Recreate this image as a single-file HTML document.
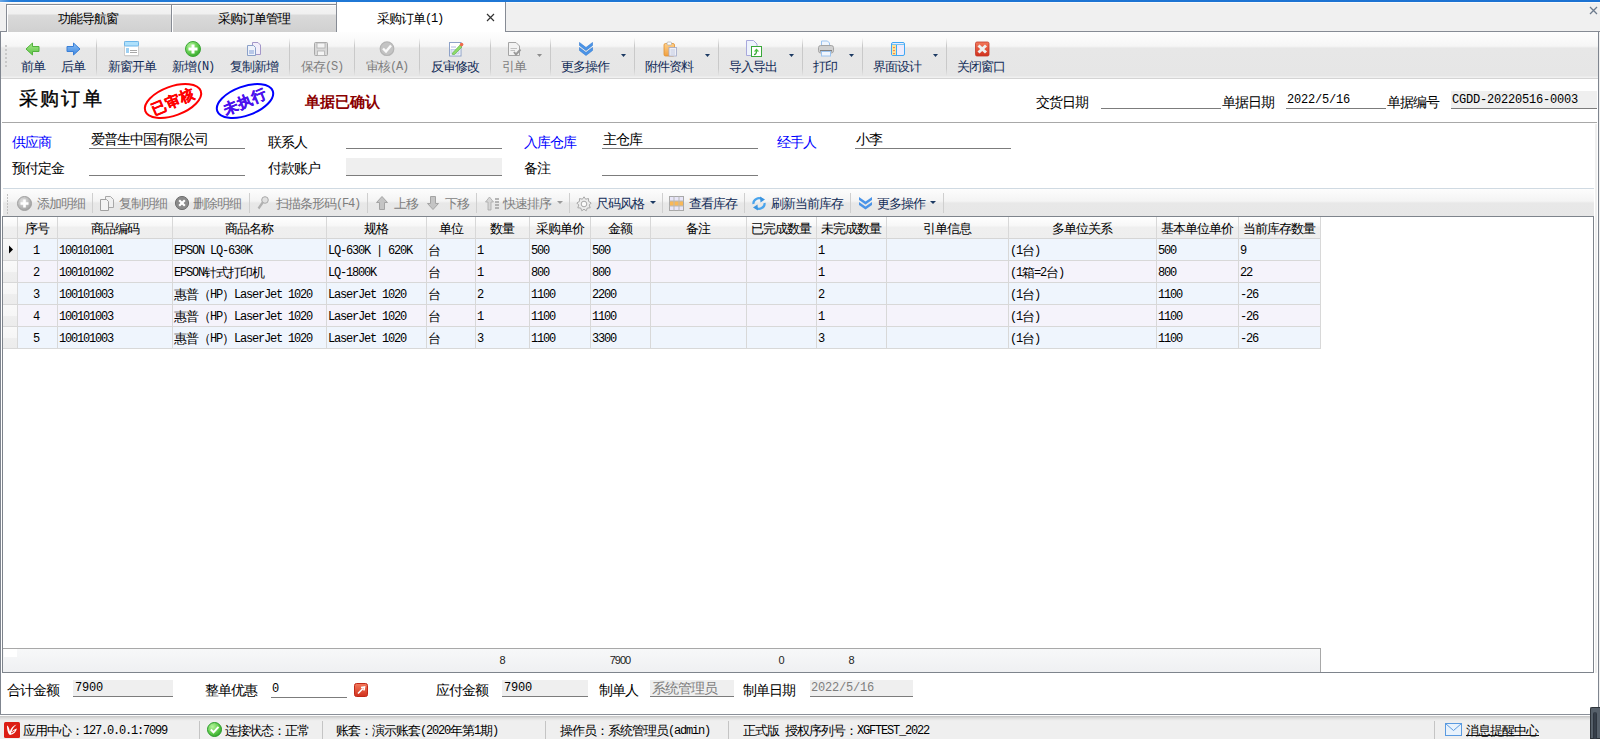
<!DOCTYPE html><html><head><meta charset="utf-8"><style>
*{margin:0;padding:0;box-sizing:border-box}
html,body{width:1600px;height:739px;overflow:hidden;background:#f0f0f0;font-family:"Liberation Sans",sans-serif;position:relative}
.t{position:absolute;font-size:13px;line-height:13px;letter-spacing:-1px;white-space:nowrap;color:#000}
.a{font-family:"Liberation Mono",monospace;font-size:12px;letter-spacing:-1.2px;position:relative;top:-1px}
.w{font-family:"Liberation Mono",monospace;font-size:12px;letter-spacing:-0.2px;position:relative;top:-1px}
.nv{color:#132d58}
.dis{color:#7e7e7e}
.bl{color:#0000ff}
.f{font-size:14px;line-height:15px;letter-spacing:-1px}
</style></head><body>
<div style="position:absolute;left:0px;top:0px;width:1600px;height:2px;background:linear-gradient(90deg,#6aa6e4,#2079d6 12px,#1c72d2)"></div>
<div style="position:absolute;left:0px;top:2px;width:1600px;height:1px;background:#fafafa"></div>
<div style="position:absolute;left:0px;top:31px;width:1600px;height:1px;background:#868b94"></div>
<div style="position:absolute;left:6px;top:4px;width:166px;height:28px;border:1px solid #868b94;border-bottom:none;box-shadow:inset 1px 1px 0 #fff;background:linear-gradient(#f3f3f3 0,#f0f0f0 9px,#dadada 10px,#d0d0d0 100%)"></div>
<div class="t " style="left:58px;top:12px;">功能导航窗</div>
<div style="position:absolute;left:171px;top:4px;width:166px;height:28px;border:1px solid #868b94;border-bottom:none;box-shadow:inset 1px 1px 0 #fff;background:linear-gradient(#f3f3f3 0,#f0f0f0 9px,#dadada 10px,#d0d0d0 100%)"></div>
<div class="t " style="left:218px;top:12px;">采购订单管理</div>
<div style="position:absolute;left:336px;top:2px;width:170px;height:30px;border-left:1px solid #868b94;border-right:1px solid #868b94;background:#fff"></div>
<div class="t " style="left:377px;top:12px;">采购订单<span class="a">(1)</span></div>
<svg style="position:absolute;left:486px;top:13px" width="9" height="9" viewBox="0 0 9 9"><path d="M1 1L8 8M8 1L1 8" stroke="#333" stroke-width="1.2"/></svg>
<svg style="position:absolute;left:1589px;top:6px" width="9" height="9" viewBox="0 0 9 9"><path d="M1 1L8 8M8 1L1 8" stroke="#6d7b8d" stroke-width="1.3"/></svg>
<div style="position:absolute;left:0px;top:32px;width:1599px;height:683px;background:#fff;border-left:1px solid #7f858f;border-right:1px solid #7f858f"></div>
<div style="position:absolute;left:0px;top:714px;width:1599px;height:1px;background:#8a8f98"></div>
<div style="position:absolute;left:1px;top:32px;width:1597px;height:46px;background:linear-gradient(#fefefe 0,#f6f6f6 14px,#f0f0f0 15px,#e7e7e7 16px,#e6e6e6 44px,#f0f0f0 45px)"></div>
<div style="position:absolute;left:1px;top:78px;width:1597px;height:1px;background:#d4d4d4"></div>
<div style="position:absolute;left:5px;top:45px;width:2px;height:2px;background:#c8c8c8"></div>
<div style="position:absolute;left:5px;top:49px;width:2px;height:2px;background:#c8c8c8"></div>
<div style="position:absolute;left:5px;top:53px;width:2px;height:2px;background:#c8c8c8"></div>
<div style="position:absolute;left:5px;top:57px;width:2px;height:2px;background:#c8c8c8"></div>
<div style="position:absolute;left:5px;top:61px;width:2px;height:2px;background:#c8c8c8"></div>
<div style="position:absolute;left:5px;top:65px;width:2px;height:2px;background:#c8c8c8"></div>
<div class="t nv" style="left:21px;top:60px;">前单</div>
<div class="t nv" style="left:61px;top:60px;">后单</div>
<div style="position:absolute;left:96px;top:38px;width:1px;height:38px;background:linear-gradient(rgba(200,200,200,0),#c9c9c9 20%,#c9c9c9 80%,rgba(200,200,200,0))"></div>
<div class="t nv" style="left:108px;top:60px;">新窗开单</div>
<div class="t nv" style="left:172px;top:60px;">新增<span class="a">(N)</span></div>
<div class="t nv" style="left:230px;top:60px;">复制新增</div>
<div style="position:absolute;left:289px;top:38px;width:1px;height:38px;background:linear-gradient(rgba(200,200,200,0),#c9c9c9 20%,#c9c9c9 80%,rgba(200,200,200,0))"></div>
<div class="t dis" style="left:301px;top:60px;">保存<span class="a">(S)</span></div>
<div style="position:absolute;left:354px;top:38px;width:1px;height:38px;background:linear-gradient(rgba(200,200,200,0),#c9c9c9 20%,#c9c9c9 80%,rgba(200,200,200,0))"></div>
<div class="t dis" style="left:366px;top:60px;">审核<span class="a">(A)</span></div>
<div style="position:absolute;left:419px;top:38px;width:1px;height:38px;background:linear-gradient(rgba(200,200,200,0),#c9c9c9 20%,#c9c9c9 80%,rgba(200,200,200,0))"></div>
<div class="t nv" style="left:431px;top:60px;">反审修改</div>
<div style="position:absolute;left:490px;top:38px;width:1px;height:38px;background:linear-gradient(rgba(200,200,200,0),#c9c9c9 20%,#c9c9c9 80%,rgba(200,200,200,0))"></div>
<div class="t dis" style="left:502px;top:60px;">引单</div>
<div style="position:absolute;left:550px;top:38px;width:1px;height:38px;background:linear-gradient(rgba(200,200,200,0),#c9c9c9 20%,#c9c9c9 80%,rgba(200,200,200,0))"></div>
<div class="t nv" style="left:561px;top:60px;">更多操作</div>
<div style="position:absolute;left:634px;top:38px;width:1px;height:38px;background:linear-gradient(rgba(200,200,200,0),#c9c9c9 20%,#c9c9c9 80%,rgba(200,200,200,0))"></div>
<div class="t nv" style="left:645px;top:60px;">附件资料</div>
<div style="position:absolute;left:718px;top:38px;width:1px;height:38px;background:linear-gradient(rgba(200,200,200,0),#c9c9c9 20%,#c9c9c9 80%,rgba(200,200,200,0))"></div>
<div class="t nv" style="left:729px;top:60px;">导入导出</div>
<div style="position:absolute;left:802px;top:38px;width:1px;height:38px;background:linear-gradient(rgba(200,200,200,0),#c9c9c9 20%,#c9c9c9 80%,rgba(200,200,200,0))"></div>
<div class="t nv" style="left:813px;top:60px;">打印</div>
<div style="position:absolute;left:862px;top:38px;width:1px;height:38px;background:linear-gradient(rgba(200,200,200,0),#c9c9c9 20%,#c9c9c9 80%,rgba(200,200,200,0))"></div>
<div class="t nv" style="left:873px;top:60px;">界面设计</div>
<div style="position:absolute;left:946px;top:38px;width:1px;height:38px;background:linear-gradient(rgba(200,200,200,0),#c9c9c9 20%,#c9c9c9 80%,rgba(200,200,200,0))"></div>
<div class="t nv" style="left:957px;top:60px;">关闭窗口</div>
<svg style="position:absolute;left:537px;top:54px" width="6" height="4" viewBox="0 0 6 4"><path d="M0 0H5L2.5 3z" fill="#8d8d8d"/></svg>
<svg style="position:absolute;left:621px;top:54px" width="6" height="4" viewBox="0 0 6 4"><path d="M0 0H5L2.5 3z" fill="#1c3a63"/></svg>
<svg style="position:absolute;left:705px;top:54px" width="6" height="4" viewBox="0 0 6 4"><path d="M0 0H5L2.5 3z" fill="#1c3a63"/></svg>
<svg style="position:absolute;left:789px;top:54px" width="6" height="4" viewBox="0 0 6 4"><path d="M0 0H5L2.5 3z" fill="#1c3a63"/></svg>
<svg style="position:absolute;left:849px;top:54px" width="6" height="4" viewBox="0 0 6 4"><path d="M0 0H5L2.5 3z" fill="#1c3a63"/></svg>
<svg style="position:absolute;left:933px;top:54px" width="6" height="4" viewBox="0 0 6 4"><path d="M0 0H5L2.5 3z" fill="#1c3a63"/></svg>
<svg width="0" height="0" style="position:absolute"><defs>
<linearGradient id="gG" x1="0" y1="0" x2="0" y2="1"><stop offset="0" stop-color="#a6e88a"/><stop offset="1" stop-color="#5cc245"/></linearGradient>
<linearGradient id="gB" x1="0" y1="0" x2="0" y2="1"><stop offset="0" stop-color="#8cc0f5"/><stop offset="1" stop-color="#3d86e0"/></linearGradient>
<radialGradient id="gC" cx="0.35" cy="0.3" r="0.75"><stop offset="0" stop-color="#b4f49c"/><stop offset="0.6" stop-color="#62cc4e"/><stop offset="1" stop-color="#34a62c"/></radialGradient>
<radialGradient id="gCg" cx="0.4" cy="0.35" r="0.7"><stop offset="0" stop-color="#e6e6e6"/><stop offset="1" stop-color="#9c9c9c"/></radialGradient>
<linearGradient id="gO" x1="0" y1="0" x2="0" y2="1"><stop offset="0" stop-color="#ffd08a"/><stop offset="1" stop-color="#f0a040"/></linearGradient>
<linearGradient id="gR" x1="0" y1="0" x2="0" y2="1"><stop offset="0" stop-color="#f47a5c"/><stop offset="1" stop-color="#d0301c"/></linearGradient>
</defs></svg>
<svg style="position:absolute;left:25px;top:42px" width="15" height="14" viewBox="0 0 15 14"><path d="M1 7L7.5 1V4.5H14V9.5H7.5V13Z" fill="url(#gG)" stroke="#52b23c" stroke-width="1"/></svg>
<svg style="position:absolute;left:66px;top:42px" width="15" height="14" viewBox="0 0 15 14"><path d="M14 7L7.5 1V4.5H1V9.5H7.5V13Z" fill="url(#gB)" stroke="#3a7fd6" stroke-width="1"/></svg>
<svg style="position:absolute;left:124px;top:41px" width="16" height="16" viewBox="0 0 16 16"><rect x="0.5" y="0.5" width="14" height="14" fill="#fff" stroke="#cdcdcd"/><rect x="0.5" y="0.5" width="14" height="4.5" rx="1" fill="#aee0fb" stroke="#6cb6ea"/><rect x="2" y="7" width="3" height="5" fill="#9ed0f2"/><path d="M6 9.5H13M6 11.5H13" stroke="#a8a8a8"/><path d="M1 15.5H15" stroke="#dcdcdc"/></svg>
<svg style="position:absolute;left:185px;top:41px" width="16" height="16" viewBox="0 0 16 16"><circle cx="8" cy="8" r="7.5" fill="url(#gC)" stroke="#3da638" stroke-width="1"/><path d="M8 3.5V12.5M3.5 8H12.5" stroke="#fff" stroke-width="3"/></svg>
<svg style="position:absolute;left:246px;top:41px" width="16" height="16" viewBox="0 0 16 16"><path d="M6.5 1.5H12L14.5 4V13.5H6.5Z" fill="#f2eefa" stroke="#a497c9"/><path d="M1.5 4.5H7.5L9.5 6.5V14.5H1.5Z" fill="#eef2fa" stroke="#8aa0c8"/><rect x="3" y="9" width="5" height="4" fill="#b8c8e8"/></svg>
<svg style="position:absolute;left:313px;top:41px" width="16" height="16" viewBox="0 0 16 16"><rect x="1.5" y="1.5" width="13" height="13" rx="1" fill="#d8d8d8" stroke="#a8a8a8"/><rect x="4" y="2" width="8" height="5" fill="#f4f4f4" stroke="#b0b0b0" stroke-width="0.8"/><rect x="4.5" y="10" width="7" height="4.5" fill="#f4f4f4" stroke="#b0b0b0" stroke-width="0.8"/></svg>
<svg style="position:absolute;left:379px;top:41px" width="16" height="16" viewBox="0 0 16 16"><circle cx="8" cy="7.7" r="6.8" fill="#c4c4c4" stroke="#b4b4b4" stroke-width="1.2"/><path d="M4 7.5L7 10.5L12 4.5" stroke="#fafafa" stroke-width="2.4" fill="none"/></svg>
<svg style="position:absolute;left:448px;top:41px" width="16" height="16" viewBox="0 0 16 16"><rect x="1.5" y="1.5" width="11.5" height="13.5" fill="#fff" stroke="#8ea2c8"/><path d="M3 6H8" stroke="#b0b8e0"/><rect x="3" y="8.5" width="8" height="4.5" fill="#dfe6f6" stroke="#b8c6e6" stroke-width="0.8"/><path d="M4.5 12L12 4L14 6L6.5 13.5H4.5Z" fill="#8edc6a" stroke="#5cb040" stroke-width="0.6"/><circle cx="13.6" cy="3.6" r="1.8" fill="#f06a4c"/></svg>
<svg style="position:absolute;left:507px;top:41px" width="15" height="16" viewBox="0 0 15 16"><path d="M1.5 1.5H9L12.5 5V14.5H1.5Z" fill="#f2f2f2" stroke="#a4a4a4"/><path d="M3.5 7.5H10M3.5 9.5H8" stroke="#c0c0c0"/><path d="M7 11L9 13.5L13.5 8.5" stroke="#9a9a9a" stroke-width="2" fill="none"/></svg>
<svg style="position:absolute;left:578px;top:41px" width="16" height="16" viewBox="0 0 16 16"><path d="M1.5 1.5L8 6.5L14.5 1.5V4.5L8 9.5L1.5 4.5Z" fill="#4a94e8" stroke="#2f78d2" stroke-width="0.6"/><path d="M1.5 6.5L8 11.5L14.5 6.5V9.5L8 14.5L1.5 9.5Z" fill="#4a94e8" stroke="#2f78d2" stroke-width="0.6"/></svg>
<svg style="position:absolute;left:663px;top:41px" width="15" height="16" viewBox="0 0 15 16"><rect x="1" y="2.5" width="10.5" height="12.5" rx="1.5" fill="url(#gO)" stroke="#e09030" stroke-width="0.8"/><rect x="4" y="1" width="4.5" height="3" rx="1" fill="#fff" stroke="#b0b0b0" stroke-width="0.8"/><rect x="6" y="6.5" width="7.5" height="8.5" fill="#eef0f8" stroke="#a0a8c8" stroke-width="0.8"/><path d="M7.5 9H12M7.5 11H12M7.5 13H12" stroke="#b8bfd8" stroke-width="0.8"/></svg>
<svg style="position:absolute;left:745px;top:40px" width="18" height="18" viewBox="0 0 18 18"><path d="M1.5 0.5H8.5L12 4V15.5H1.5Z" fill="#eef3fc" stroke="#a8a8dc"/><rect x="6.5" y="6.5" width="10" height="10" fill="#fff" stroke="#3aa83a"/><path d="M9 14.5C11 14.5 11.5 13 11.5 11" stroke="#3aa83a" stroke-width="1.3" fill="none"/><path d="M8.8 11.5L11.5 8.5L14.2 11.5Z" fill="#4cc040"/></svg>
<svg style="position:absolute;left:818px;top:40px" width="17" height="17" viewBox="0 0 17 17"><path d="M3.5 1H9.5L11.5 3V7H3.5Z" fill="#f0f6fe" stroke="#9cc4f0"/><rect x="0.5" y="5.5" width="15" height="7.5" rx="2.2" fill="#d0d0d0" stroke="#a4a4a4"/><path d="M2 10.8H14" stroke="#6a6a6a" stroke-width="1.2"/><rect x="3.5" y="11.5" width="9" height="4.5" fill="#f0f6fe" stroke="#9cc4f0"/></svg>
<svg style="position:absolute;left:891px;top:41px" width="15" height="16" viewBox="0 0 15 16"><rect x="0.5" y="1.5" width="13" height="13" rx="1.5" fill="#ecebfc" stroke="#40a8f4"/><path d="M1 3.5H13" stroke="#78c4f4"/><rect x="1" y="4" width="4.5" height="10" fill="#fbe59a"/><path d="M5.5 4V14" stroke="#40a8f4"/><path d="M2 6H4L3 7.5ZM2 9H4L3 10.5ZM2 12H4L3 13.5Z" fill="#f05830"/></svg>
<svg style="position:absolute;left:975px;top:41px" width="15" height="16" viewBox="0 0 15 16"><rect x="0.5" y="1" width="13.5" height="14" rx="1.5" fill="url(#gR)" stroke="#c03828" stroke-width="0.8"/><path d="M3.5 4.5L11 11.5M11 4.5L3.5 11.5" stroke="#eef0f0" stroke-width="3"/></svg>
<div class="t " style="left:19px;top:89px;font-size:19px;line-height:19px;letter-spacing:2.2px;-webkit-text-stroke:0.35px #000">采购订单</div>
<svg style="position:absolute;left:138.5px;top:79.8px" width="68" height="42" viewBox="0 0 68 42"><g transform="rotate(-20 34 21)"><ellipse cx="34" cy="21" rx="29.5" ry="14.5" fill="none" stroke="#ff0000" stroke-width="2"/></g><g transform="rotate(-23 34 21)"><text x="34" y="26.5" text-anchor="middle" font-size="14.5" font-weight="bold" fill="#ff0000" stroke="#ff0000" stroke-width="0.35" font-family="Liberation Sans">已审核</text></g></svg>
<svg style="position:absolute;left:210.5px;top:79.8px" width="68" height="42" viewBox="0 0 68 42"><g transform="rotate(-20 34 21)"><ellipse cx="34" cy="21" rx="29.5" ry="14.5" fill="none" stroke="#0000ff" stroke-width="2"/></g><g transform="rotate(-23 34 21)"><text x="34" y="26.5" text-anchor="middle" font-size="14.5" font-weight="bold" fill="#4a10ee" stroke="#4a10ee" stroke-width="0.35" font-family="Liberation Sans">未执行</text></g></svg>
<div class="t " style="left:305px;top:94px;font-size:15px;line-height:15px;letter-spacing:0;font-weight:bold;color:#8b0000">单据已确认</div>
<div class="t f" style="left:1036px;top:95px;">交货日期</div>
<div style="position:absolute;left:1101px;top:108px;width:120px;height:1px;background:#7c7c7c"></div>
<div class="t f" style="left:1222px;top:95px;">单据日期</div>
<div class="t " style="left:1287px;top:93px;"><span class="w">2022/5/16</span></div>
<div style="position:absolute;left:1286px;top:108px;width:100px;height:1px;background:#7c7c7c"></div>
<div class="t f" style="left:1387px;top:95px;">单据编号</div>
<div style="position:absolute;left:1451px;top:91px;width:146px;height:18px;background:#efefef;border-bottom:1px solid #7c7c7c"></div>
<div class="t " style="left:1452px;top:93px;"><span class="w">CGDD-20220516-0003</span></div>
<div style="position:absolute;left:2px;top:122px;width:1595px;height:1px;background:#a8a8a8"></div>
<div style="position:absolute;left:1595px;top:124px;width:2px;height:549px;background:#efefef"></div>
<div class="t bl f" style="left:12px;top:135px;">供应商</div>
<div class="t " style="left:91px;top:132px;font-size:14px;line-height:15px">爱普生中国有限公司</div>
<div style="position:absolute;left:89px;top:148px;width:156px;height:1px;background:#7c7c7c"></div>
<div class="t f" style="left:268px;top:135px;">联系人</div>
<div style="position:absolute;left:346px;top:148px;width:156px;height:1px;background:#7c7c7c"></div>
<div class="t bl f" style="left:524px;top:135px;">入库仓库</div>
<div class="t " style="left:603px;top:132px;font-size:14px;line-height:15px">主仓库</div>
<div style="position:absolute;left:602px;top:148px;width:156px;height:1px;background:#7c7c7c"></div>
<div class="t bl f" style="left:777px;top:135px;">经手人</div>
<div class="t " style="left:856px;top:132px;font-size:14px;line-height:15px">小李</div>
<div style="position:absolute;left:855px;top:148px;width:156px;height:1px;background:#7c7c7c"></div>
<div class="t f" style="left:12px;top:161px;">预付定金</div>
<div style="position:absolute;left:89px;top:175px;width:156px;height:1px;background:#7c7c7c"></div>
<div class="t f" style="left:268px;top:161px;">付款账户</div>
<div style="position:absolute;left:346px;top:158px;width:156px;height:18px;background:#efefef;border-bottom:1px solid #7c7c7c"></div>
<div class="t f" style="left:524px;top:161px;">备注</div>
<div style="position:absolute;left:602px;top:175px;width:156px;height:1px;background:#7c7c7c"></div>
<div style="position:absolute;left:3px;top:188px;width:1591px;height:1px;background:#d0dae2"></div>
<div style="position:absolute;left:3px;top:189px;width:1591px;height:27px;background:linear-gradient(#fdfdfd 0,#f4f4f4 12px,#efefef 13px,#e8e8e8 14px,#e7e7e7 100%)"></div>
<div style="position:absolute;left:7px;top:194px;width:1px;height:2px;background:#c0c0c0"></div>
<div style="position:absolute;left:7px;top:197px;width:1px;height:2px;background:#c0c0c0"></div>
<div style="position:absolute;left:7px;top:200px;width:1px;height:2px;background:#c0c0c0"></div>
<div style="position:absolute;left:7px;top:203px;width:1px;height:2px;background:#c0c0c0"></div>
<div style="position:absolute;left:7px;top:206px;width:1px;height:2px;background:#c0c0c0"></div>
<div style="position:absolute;left:7px;top:209px;width:1px;height:2px;background:#c0c0c0"></div>
<div style="position:absolute;left:7px;top:212px;width:1px;height:2px;background:#c0c0c0"></div>
<div style="position:absolute;left:92px;top:193px;width:1px;height:20px;background:#cfcfcf"></div>
<div style="position:absolute;left:249px;top:193px;width:1px;height:20px;background:#cfcfcf"></div>
<div style="position:absolute;left:367px;top:193px;width:1px;height:20px;background:#cfcfcf"></div>
<div style="position:absolute;left:476px;top:193px;width:1px;height:20px;background:#cfcfcf"></div>
<div style="position:absolute;left:569px;top:193px;width:1px;height:20px;background:#cfcfcf"></div>
<div style="position:absolute;left:662px;top:193px;width:1px;height:20px;background:#cfcfcf"></div>
<div style="position:absolute;left:744px;top:193px;width:1px;height:20px;background:#cfcfcf"></div>
<div style="position:absolute;left:850px;top:193px;width:1px;height:20px;background:#cfcfcf"></div>
<div style="position:absolute;left:943px;top:193px;width:1px;height:20px;background:#cfcfcf"></div>
<div class="t dis" style="left:37px;top:197px;">添加明细</div>
<div class="t dis" style="left:119px;top:197px;">复制明细</div>
<div class="t dis" style="left:193px;top:197px;">删除明细</div>
<div class="t dis" style="left:276px;top:197px;">扫描条形码<span class="a">(F4)</span></div>
<div class="t dis" style="left:394px;top:197px;">上移</div>
<div class="t dis" style="left:445px;top:197px;">下移</div>
<div class="t dis" style="left:503px;top:197px;">快速排序</div>
<div class="t nv" style="left:596px;top:197px;">尺码风格</div>
<div class="t nv" style="left:689px;top:197px;">查看库存</div>
<div class="t nv" style="left:771px;top:197px;">刷新当前库存</div>
<div class="t nv" style="left:877px;top:197px;">更多操作</div>
<svg style="position:absolute;left:557px;top:201px" width="6" height="4" viewBox="0 0 6 4"><path d="M0 0H6L3 3z" fill="#9a9a9a"/></svg>
<svg style="position:absolute;left:650px;top:201px" width="6" height="4" viewBox="0 0 6 4"><path d="M0 0H6L3 3z" fill="#1c3a63"/></svg>
<svg style="position:absolute;left:930px;top:201px" width="6" height="4" viewBox="0 0 6 4"><path d="M0 0H6L3 3z" fill="#1c3a63"/></svg>
<svg style="position:absolute;left:17px;top:196px" width="15" height="15" viewBox="0 0 15 15"><circle cx="7.5" cy="7.5" r="7" fill="url(#gCg)" stroke="#a0a0a0"/><path d="M7.5 3.5V11.5M3.5 7.5H11.5" stroke="#fff" stroke-width="2.6"/></svg>
<svg style="position:absolute;left:100px;top:196px" width="14" height="15" viewBox="0 0 14 15"><path d="M5.5 0.5H10.5L13.5 3.5V11.5H5.5Z" fill="#f0f0f0" stroke="#a8a8a8"/><path d="M0.5 3.5H6.5L8.5 5.5V14.5H0.5Z" fill="#f4f4f4" stroke="#a0a0a0"/></svg>
<svg style="position:absolute;left:175px;top:196px" width="14" height="14" viewBox="0 0 14 14"><circle cx="7" cy="7" r="6.6" fill="#8a8a8a" stroke="#707070"/><path d="M4.2 4.2L9.8 9.8M9.8 4.2L4.2 9.8" stroke="#fff" stroke-width="2.2"/></svg>
<svg style="position:absolute;left:257px;top:196px" width="12" height="14" viewBox="0 0 12 14"><circle cx="8" cy="4" r="3.3" fill="#e0e0e0" stroke="#a8a8a8"/><path d="M6 6L1.5 12.5" stroke="#b0b0b0" stroke-width="2.2"/></svg>
<svg style="position:absolute;left:376px;top:196px" width="12" height="14" viewBox="0 0 12 14"><path d="M6 0.5L11.5 6.5H8.5V13.5H3.5V6.5H0.5Z" fill="#c4c4c4" stroke="#a4a4a4"/></svg>
<svg style="position:absolute;left:427px;top:196px" width="12" height="14" viewBox="0 0 12 14"><path d="M6 13.5L11.5 7.5H8.5V0.5H3.5V7.5H0.5Z" fill="#c4c4c4" stroke="#a4a4a4"/></svg>
<svg style="position:absolute;left:485px;top:196px" width="15" height="15" viewBox="0 0 15 15"><path d="M4.5 1L8.5 6H6V14H3V6H0.5Z" fill="#d6d6d6" stroke="#a8a8a8" stroke-width="0.8"/><path d="M10 3H14M10 6H14M10 9H14M10 12H14" stroke="#a0a0a0" stroke-width="1.4"/></svg>
<svg style="position:absolute;left:576px;top:196px" width="16" height="16" viewBox="0 0 16 16"><path d="M8 0.8L9.6 3.2L12.5 2.5L12.6 5.4L15.2 7L13.2 9L14.2 11.8L11.3 12L10.2 14.8L8 13.2L5.8 14.8L4.7 12L1.8 11.8L2.8 9L0.8 7L3.4 5.4L3.5 2.5L6.4 3.2Z" fill="#ececec" stroke="#a8a8a8"/><circle cx="8" cy="8" r="2.8" fill="#fafafa" stroke="#a8a8a8"/></svg>
<svg style="position:absolute;left:669px;top:196px" width="15" height="15" viewBox="0 0 15 15"><rect x="0.5" y="0.5" width="14" height="14" fill="#e8e6f8" stroke="#a8a8a8"/><rect x="1" y="5" width="13" height="5" fill="#f8b858"/><path d="M5 0.5V14.5M10 0.5V14.5M0.5 5H14.5M0.5 10H14.5" stroke="#b8b8b8"/></svg>
<svg style="position:absolute;left:751px;top:196px" width="16" height="15" viewBox="0 0 16 15"><path d="M2.5 8A5.5 5 0 0 1 11.5 3.5" stroke="#4aa4ec" stroke-width="2.2" fill="none"/><path d="M13.5 7A5.5 5 0 0 1 4.5 11.5" stroke="#4aa4ec" stroke-width="2.2" fill="none"/><path d="M9 0.5L14 3.5L9.5 6.5Z" fill="#3a94e0"/><path d="M7 14.5L2 11.5L6.5 8.5Z" fill="#3a94e0"/></svg>
<svg style="position:absolute;left:858px;top:196px" width="15" height="15" viewBox="0 0 15 15"><path d="M1 1L7.5 5.5L14 1V4L7.5 8.5L1 4Z" fill="#4a94e8"/><path d="M1 6L7.5 10.5L14 6V9L7.5 13.5L1 9Z" fill="#4a94e8"/></svg>
<div style="position:absolute;left:2px;top:216px;width:1592px;height:457px;border:1px solid #7e848c;border-top-width:1px;background:#fff"></div>
<div style="position:absolute;left:3px;top:217px;width:1317px;height:21px;background:linear-gradient(#ffffff 0,#f7f7f7 9px,#efefef 10px,#eeeeee 100%)"></div>
<div style="position:absolute;left:3px;top:238px;width:1317px;height:1px;background:#d5d5d5"></div>
<div style="position:absolute;left:3px;top:239px;width:14px;height:21px;background:linear-gradient(#f9f9f9,#f6f6f6 50%,#eeeeee 55%,#ececec)"></div>
<div style="position:absolute;left:17px;top:239px;width:1303px;height:21px;background:#eff5fd"></div>
<div style="position:absolute;left:3px;top:260px;width:1317px;height:1px;background:#d8d8d8"></div>
<div style="position:absolute;left:3px;top:261px;width:14px;height:21px;background:linear-gradient(#f9f9f9,#f6f6f6 50%,#eeeeee 55%,#ececec)"></div>
<div style="position:absolute;left:17px;top:261px;width:1303px;height:21px;background:#f5f3fb"></div>
<div style="position:absolute;left:3px;top:282px;width:1317px;height:1px;background:#d8d8d8"></div>
<div style="position:absolute;left:3px;top:283px;width:14px;height:21px;background:linear-gradient(#f9f9f9,#f6f6f6 50%,#eeeeee 55%,#ececec)"></div>
<div style="position:absolute;left:17px;top:283px;width:1303px;height:21px;background:#eff5fd"></div>
<div style="position:absolute;left:3px;top:304px;width:1317px;height:1px;background:#d8d8d8"></div>
<div style="position:absolute;left:3px;top:305px;width:14px;height:21px;background:linear-gradient(#f9f9f9,#f6f6f6 50%,#eeeeee 55%,#ececec)"></div>
<div style="position:absolute;left:17px;top:305px;width:1303px;height:21px;background:#f5f3fb"></div>
<div style="position:absolute;left:3px;top:326px;width:1317px;height:1px;background:#d8d8d8"></div>
<div style="position:absolute;left:3px;top:327px;width:14px;height:21px;background:linear-gradient(#f9f9f9,#f6f6f6 50%,#eeeeee 55%,#ececec)"></div>
<div style="position:absolute;left:17px;top:327px;width:1303px;height:21px;background:#eff5fd"></div>
<div style="position:absolute;left:3px;top:348px;width:1317px;height:1px;background:#d8d8d8"></div>
<div style="position:absolute;left:17px;top:217px;width:1px;height:132px;background:#d8d8d8"></div>
<div style="position:absolute;left:57px;top:217px;width:1px;height:132px;background:#d8d8d8"></div>
<div style="position:absolute;left:172px;top:217px;width:1px;height:132px;background:#d8d8d8"></div>
<div style="position:absolute;left:326px;top:217px;width:1px;height:132px;background:#d8d8d8"></div>
<div style="position:absolute;left:426px;top:217px;width:1px;height:132px;background:#d8d8d8"></div>
<div style="position:absolute;left:475px;top:217px;width:1px;height:132px;background:#d8d8d8"></div>
<div style="position:absolute;left:529px;top:217px;width:1px;height:132px;background:#d8d8d8"></div>
<div style="position:absolute;left:590px;top:217px;width:1px;height:132px;background:#d8d8d8"></div>
<div style="position:absolute;left:650px;top:217px;width:1px;height:132px;background:#d8d8d8"></div>
<div style="position:absolute;left:746px;top:217px;width:1px;height:132px;background:#d8d8d8"></div>
<div style="position:absolute;left:816px;top:217px;width:1px;height:132px;background:#d8d8d8"></div>
<div style="position:absolute;left:886px;top:217px;width:1px;height:132px;background:#d8d8d8"></div>
<div style="position:absolute;left:1008px;top:217px;width:1px;height:132px;background:#d8d8d8"></div>
<div style="position:absolute;left:1156px;top:217px;width:1px;height:132px;background:#d8d8d8"></div>
<div style="position:absolute;left:1238px;top:217px;width:1px;height:132px;background:#d8d8d8"></div>
<div style="position:absolute;left:1320px;top:217px;width:1px;height:132px;background:#d8d8d8"></div>
<div class="t" style="left:17px;top:222px;width:40px;text-align:center">序号</div>
<div class="t" style="left:57px;top:222px;width:115px;text-align:center">商品编码</div>
<div class="t" style="left:172px;top:222px;width:154px;text-align:center">商品名称</div>
<div class="t" style="left:326px;top:222px;width:100px;text-align:center">规格</div>
<div class="t" style="left:426px;top:222px;width:49px;text-align:center">单位</div>
<div class="t" style="left:475px;top:222px;width:54px;text-align:center">数量</div>
<div class="t" style="left:529px;top:222px;width:61px;text-align:center">采购单价</div>
<div class="t" style="left:590px;top:222px;width:60px;text-align:center">金额</div>
<div class="t" style="left:650px;top:222px;width:96px;text-align:center">备注</div>
<div class="t" style="left:746px;top:222px;width:70px;text-align:center">已完成数量</div>
<div class="t" style="left:816px;top:222px;width:70px;text-align:center">未完成数量</div>
<div class="t" style="left:886px;top:222px;width:122px;text-align:center">引单信息</div>
<div class="t" style="left:1008px;top:222px;width:148px;text-align:center">多单位关系</div>
<div class="t" style="left:1156px;top:222px;width:82px;text-align:center">基本单位单价</div>
<div class="t" style="left:1238px;top:222px;width:82px;text-align:center">当前库存数量</div>
<div class="t" style="left:16px;top:244px;width:40px;text-align:center"><span class="a">1</span></div>
<div class="t " style="left:59px;top:244px;"><span class="a">100101001</span></div>
<div class="t " style="left:174px;top:244px;"><span class="a">EPSON&nbsp;LQ-630K</span></div>
<div class="t " style="left:328px;top:244px;"><span class="a">LQ-630K&nbsp;|&nbsp;620K</span></div>
<div class="t " style="left:428px;top:244px;">台</div>
<div class="t " style="left:477px;top:244px;"><span class="a">1</span></div>
<div class="t " style="left:531px;top:244px;"><span class="a">500</span></div>
<div class="t " style="left:592px;top:244px;"><span class="a">500</span></div>
<div class="t " style="left:818px;top:244px;"><span class="a">1</span></div>
<div class="t " style="left:1010px;top:244px;"><span class="a">(1</span>台<span class="a">)</span></div>
<div class="t " style="left:1158px;top:244px;"><span class="a">500</span></div>
<div class="t " style="left:1240px;top:244px;"><span class="a">9</span></div>
<div class="t" style="left:16px;top:266px;width:40px;text-align:center"><span class="a">2</span></div>
<div class="t " style="left:59px;top:266px;"><span class="a">100101002</span></div>
<div class="t " style="left:174px;top:266px;"><span class="a">EPSON</span>针式打印机</div>
<div class="t " style="left:328px;top:266px;"><span class="a">LQ-1800K</span></div>
<div class="t " style="left:428px;top:266px;">台</div>
<div class="t " style="left:477px;top:266px;"><span class="a">1</span></div>
<div class="t " style="left:531px;top:266px;"><span class="a">800</span></div>
<div class="t " style="left:592px;top:266px;"><span class="a">800</span></div>
<div class="t " style="left:818px;top:266px;"><span class="a">1</span></div>
<div class="t " style="left:1010px;top:266px;"><span class="a">(1</span>箱<span class="a">=2</span>台<span class="a">)</span></div>
<div class="t " style="left:1158px;top:266px;"><span class="a">800</span></div>
<div class="t " style="left:1240px;top:266px;"><span class="a">22</span></div>
<div class="t" style="left:16px;top:288px;width:40px;text-align:center"><span class="a">3</span></div>
<div class="t " style="left:59px;top:288px;"><span class="a">100101003</span></div>
<div class="t " style="left:174px;top:288px;">惠普（<span class="a">HP</span>）<span class="a">LaserJet&nbsp;1020</span></div>
<div class="t " style="left:328px;top:288px;"><span class="a">LaserJet&nbsp;1020</span></div>
<div class="t " style="left:428px;top:288px;">台</div>
<div class="t " style="left:477px;top:288px;"><span class="a">2</span></div>
<div class="t " style="left:531px;top:288px;"><span class="a">1100</span></div>
<div class="t " style="left:592px;top:288px;"><span class="a">2200</span></div>
<div class="t " style="left:818px;top:288px;"><span class="a">2</span></div>
<div class="t " style="left:1010px;top:288px;"><span class="a">(1</span>台<span class="a">)</span></div>
<div class="t " style="left:1158px;top:288px;"><span class="a">1100</span></div>
<div class="t " style="left:1240px;top:288px;"><span class="a">-26</span></div>
<div class="t" style="left:16px;top:310px;width:40px;text-align:center"><span class="a">4</span></div>
<div class="t " style="left:59px;top:310px;"><span class="a">100101003</span></div>
<div class="t " style="left:174px;top:310px;">惠普（<span class="a">HP</span>）<span class="a">LaserJet&nbsp;1020</span></div>
<div class="t " style="left:328px;top:310px;"><span class="a">LaserJet&nbsp;1020</span></div>
<div class="t " style="left:428px;top:310px;">台</div>
<div class="t " style="left:477px;top:310px;"><span class="a">1</span></div>
<div class="t " style="left:531px;top:310px;"><span class="a">1100</span></div>
<div class="t " style="left:592px;top:310px;"><span class="a">1100</span></div>
<div class="t " style="left:818px;top:310px;"><span class="a">1</span></div>
<div class="t " style="left:1010px;top:310px;"><span class="a">(1</span>台<span class="a">)</span></div>
<div class="t " style="left:1158px;top:310px;"><span class="a">1100</span></div>
<div class="t " style="left:1240px;top:310px;"><span class="a">-26</span></div>
<div class="t" style="left:16px;top:332px;width:40px;text-align:center"><span class="a">5</span></div>
<div class="t " style="left:59px;top:332px;"><span class="a">100101003</span></div>
<div class="t " style="left:174px;top:332px;">惠普（<span class="a">HP</span>）<span class="a">LaserJet&nbsp;1020</span></div>
<div class="t " style="left:328px;top:332px;"><span class="a">LaserJet&nbsp;1020</span></div>
<div class="t " style="left:428px;top:332px;">台</div>
<div class="t " style="left:477px;top:332px;"><span class="a">3</span></div>
<div class="t " style="left:531px;top:332px;"><span class="a">1100</span></div>
<div class="t " style="left:592px;top:332px;"><span class="a">3300</span></div>
<div class="t " style="left:818px;top:332px;"><span class="a">3</span></div>
<div class="t " style="left:1010px;top:332px;"><span class="a">(1</span>台<span class="a">)</span></div>
<div class="t " style="left:1158px;top:332px;"><span class="a">1100</span></div>
<div class="t " style="left:1240px;top:332px;"><span class="a">-26</span></div>
<svg style="position:absolute;left:9px;top:245px" width="5" height="9" viewBox="0 0 5 9"><path d="M0 0.5L4 4.5L0 8.5Z" fill="#000"/></svg>
<div style="position:absolute;left:3px;top:648px;width:1317px;height:24px;border-top:1px solid #a8a8a8;background:linear-gradient(#f7f8f9,#eff0f2)"></div>
<div style="position:absolute;left:1320px;top:648px;width:1px;height:24px;background:#a8a8a8"></div>
<div style="position:absolute;left:4px;top:649px;width:13px;height:8px;background:#fff"></div>
<div class="t" style="left:475px;top:654px;width:54px;text-align:center;font-size:11px;color:#222">8</div>
<div class="t" style="left:590px;top:654px;width:60px;text-align:center;font-size:11px;color:#222">7900</div>
<div class="t" style="left:746px;top:654px;width:70px;text-align:center;font-size:11px;color:#222">0</div>
<div class="t" style="left:816px;top:654px;width:70px;text-align:center;font-size:11px;color:#222">8</div>
<div class="t f" style="left:7px;top:683px;">合计金额</div>
<div style="position:absolute;left:73px;top:680px;width:100px;height:17px;background:#efefef;border-bottom:1px solid #7c7c7c"></div>
<div class="t " style="left:75px;top:681px;"><span class="w">7900</span></div>
<div class="t f" style="left:205px;top:683px;">整单优惠</div>
<div class="t " style="left:272px;top:682px;"><span class="w">0</span></div>
<div style="position:absolute;left:271px;top:697px;width:76px;height:1px;background:#7c7c7c"></div>
<svg style="position:absolute;left:354px;top:683px" width="14" height="14" viewBox="0 0 14 14"><rect x="0.5" y="0.5" width="13" height="13" rx="2" fill="url(#gR)" stroke="#c02818"/><path d="M4 10.5L9 5.5M7 4.5L10.5 4L10 7.5" stroke="#fff" stroke-width="1.6" fill="none"/></svg>
<div class="t f" style="left:436px;top:683px;">应付金额</div>
<div style="position:absolute;left:502px;top:680px;width:86px;height:17px;background:#efefef;border-bottom:1px solid #7c7c7c"></div>
<div class="t " style="left:504px;top:681px;"><span class="w">7900</span></div>
<div class="t f" style="left:599px;top:683px;">制单人</div>
<div style="position:absolute;left:650px;top:680px;width:84px;height:17px;background:#efefef;border-bottom:1px solid #7c7c7c"></div>
<div class="t dis" style="left:652px;top:681px;font-size:14px;line-height:15px">系统管理员</div>
<div class="t f" style="left:743px;top:683px;">制单日期</div>
<div style="position:absolute;left:810px;top:680px;width:103px;height:17px;background:#efefef;border-bottom:1px solid #7c7c7c"></div>
<div class="t dis" style="left:811px;top:681px;"><span class="w">2022/5/16</span></div>
<div style="position:absolute;left:0px;top:715px;width:1600px;height:1px;background:#fdfdfd"></div>
<div style="position:absolute;left:0px;top:716px;width:1600px;height:23px;background:linear-gradient(#c4c4c4 0,#dcdcdc 2px,#ebebeb 4px,#efefef 5px,#efefef)"></div>
<svg style="position:absolute;left:4px;top:722px" width="16" height="16" viewBox="0 0 16 16"><rect x="0" y="0" width="16" height="16" rx="1.5" fill="#dc1e14"/><path d="M3 3.5C4.5 4 5.5 7 5.8 9.5C7 6 9.5 3.5 12.5 2.5C9.5 5 8 7.5 7.5 10C9 8 11 7 13 6.5C12 10 9.5 12.5 6 13C4 12 3 8 3 3.5Z" fill="#fff"/><path d="M7 11C8.5 10 9.5 10 10.5 9" stroke="#dc1e14" stroke-width="1" fill="none"/></svg>
<div class="t " style="left:23px;top:724px;">应用中心：<span class="a">127.0.0.1:7099</span></div>
<div style="position:absolute;left:199px;top:721px;width:1px;height:18px;background:#c4c4c4"></div>
<svg style="position:absolute;left:207px;top:722px" width="15" height="15" viewBox="0 0 15 15"><circle cx="7.5" cy="7.5" r="7" fill="url(#gC)" stroke="#2a9a2a"/><path d="M3.8 7.5L6.5 10.3L11.5 4.8" stroke="#fff" stroke-width="2" fill="none"/></svg>
<div class="t " style="left:225px;top:724px;">连接状态：正常</div>
<div style="position:absolute;left:322px;top:721px;width:1px;height:18px;background:#c4c4c4"></div>
<div class="t " style="left:336px;top:724px;">账套：演示账套<span class="a">(2020</span>年第<span class="a">1</span>期<span class="a">)</span></div>
<div style="position:absolute;left:545px;top:721px;width:1px;height:18px;background:#c4c4c4"></div>
<div class="t " style="left:560px;top:724px;">操作员：系统管理员<span class="a">(admin)</span></div>
<div style="position:absolute;left:728px;top:721px;width:1px;height:18px;background:#c4c4c4"></div>
<div class="t " style="left:743px;top:724px;">正式版<span class="a">&nbsp;</span>授权序列号：<span class="a">XGFTEST_2022</span></div>
<div style="position:absolute;left:1434px;top:721px;width:1px;height:18px;background:#c4c4c4"></div>
<svg style="position:absolute;left:1445px;top:723px" width="17" height="13" viewBox="0 0 17 13"><rect x="0.5" y="0.5" width="16" height="12" fill="#e8f2fc" stroke="#5a9ae0"/><path d="M0.5 0.5L8.5 7.5L16.5 0.5" stroke="#5a9ae0" fill="none"/></svg>
<div class="t " style="left:1466px;top:724px;">消息提醒中心</div>
<div style="position:absolute;left:1466px;top:735px;width:73px;height:1px;background:#111"></div>
<div style="position:absolute;left:1590px;top:707px;width:10px;height:32px;background:#56606a;border:1px solid #2e343a;border-right:none;border-radius:2px 0 0 0"></div>
<div style="position:absolute;left:1593px;top:712px;width:4px;height:27px;background:linear-gradient(90deg,#2a3038,#3a4450,#2a3038);border-radius:2px 2px 0 0"></div>
</body></html>
